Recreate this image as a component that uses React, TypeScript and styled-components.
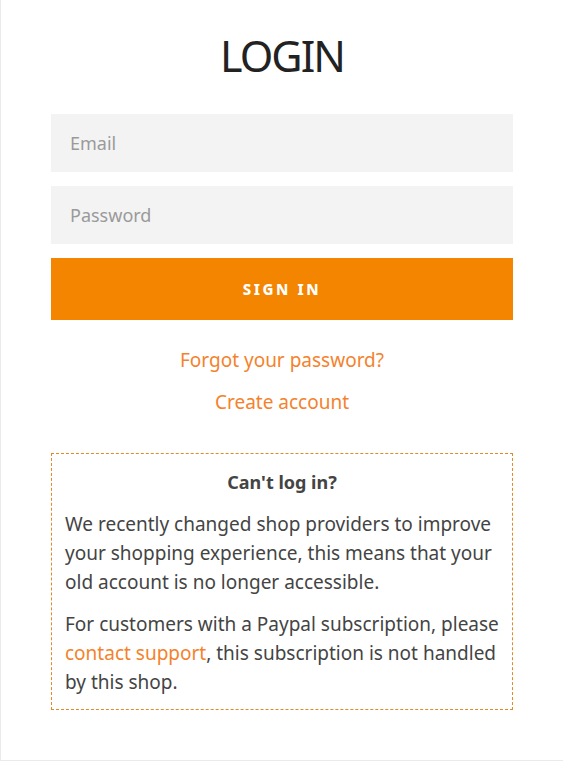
import React from "react";
import styled, { createGlobalStyle } from "styled-components";

const Global = createGlobalStyle`
  html, body { margin: 0; padding: 0; background: #fff; }
  body { font-family: "Noto Sans", "Open Sans", sans-serif; }
  * { box-sizing: border-box; }
`;

const Page = styled.div`
  width: 563px;
  height: 761px;
  border-left: 1px solid #ebebeb;
  border-bottom: 1px solid #ebebeb;
  padding: 24px 50px 0 50px;
  display: flex;
  flex-direction: column;
`;

const Title = styled.h1`
  margin: 0 0 26px;
  font-size: 43px;
  font-weight: 400;
  line-height: 64px;
  letter-spacing: -2px;
  color: #222;
  text-align: center;
`;

const Form = styled.form`
  display: flex;
  flex-direction: column;
  gap: 14px;
`;

const Input = styled.input`
  height: 58px;
  border: none;
  background: #f3f3f3;
  padding: 0 19px;
  font-family: inherit;
  font-size: 18px;
  color: #444;
  outline: none;
  &::placeholder { color: #9a9a9a; }
`;

const Button = styled.button`
  height: 62px;
  border: none;
  background: #f38500;
  color: #fff;
  font-family: inherit;
  font-size: 15px;
  font-weight: 800;
  letter-spacing: 2.6px;
  text-transform: uppercase;
  cursor: pointer;
`;

const Links = styled.div`
  display: flex;
  flex-direction: column;
  align-items: center;
  gap: 13px;
  margin-top: 26px;
`;

const Link = styled.a`
  color: #f4822c;
  font-size: 19px;
  line-height: 29px;
  text-decoration: none;
`;

const Notice = styled.div`
  margin-top: 36px;
  border: 1px dashed #e28a28;
  padding: 13px 13px 12px 13px;
  color: #444;
`;

const NoticeTitle = styled.div`
  text-align: center;
  font-weight: 700;
  font-size: 18px;
  line-height: 30px;
  margin-bottom: 13px;
`;

const Para = styled.p`
  margin: 0 0 13px;
  font-size: 19px;
  line-height: 29px;
  &:last-child { margin-bottom: 0; }
`;

const InlineLink = styled.a`
  color: #f4822c;
  text-decoration: none;
`;

export default function App() {
  return (
    <>
      <Global />
      <Page>
        <Title>LOGIN</Title>
        <Form onSubmit={(e) => e.preventDefault()}>
          <Input type="email" placeholder="Email" />
          <Input type="password" placeholder="Password" />
          <Button type="submit">Sign in</Button>
        </Form>
        <Links>
          <Link href="#">Forgot your password?</Link>
          <Link href="#">Create account</Link>
        </Links>
        <Notice>
          <NoticeTitle>Can't log in?</NoticeTitle>
          <Para>
            We recently changed shop providers to improve your shopping experience, this means that your old account is no longer accessible.
          </Para>
          <Para>
            For customers with a Paypal subscription, please <InlineLink href="#">contact support</InlineLink>, this subscription is not handled by this shop.
          </Para>
        </Notice>
      </Page>
    </>
  );
}
